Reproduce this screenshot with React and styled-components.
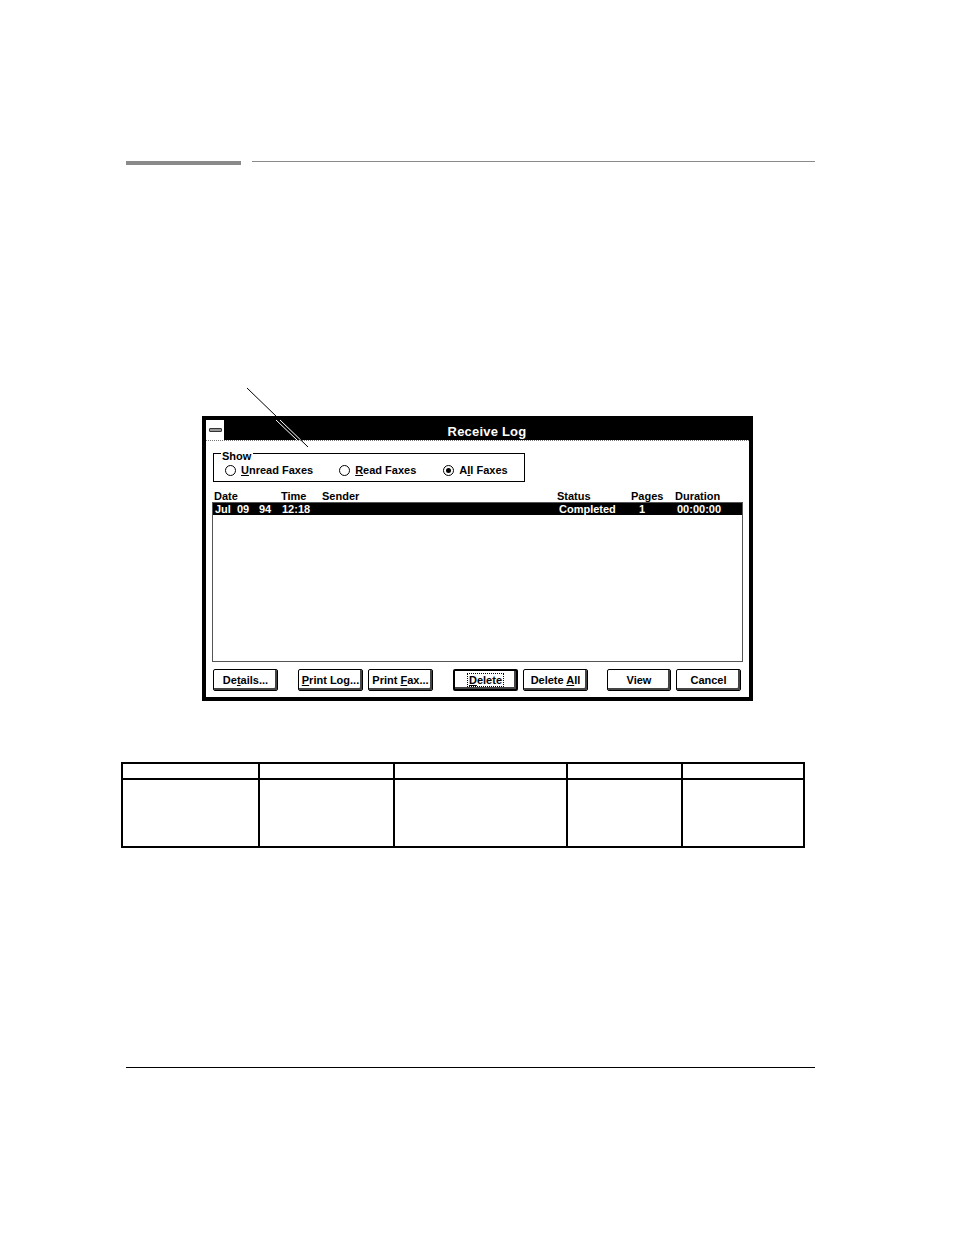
import React from 'react'
import styled, { createGlobalStyle } from 'styled-components'

const GlobalStyle = createGlobalStyle`
    html, body {
        margin: 0;
        padding: 0;
        background: #fff;
    }
    body {
        font-family: "Liberation Sans", Arial, sans-serif;
        color: #000;
    }
`

// column grid shared by the header line and the list rows
const COLUMNS = '67px 41px 235px 74px 44px 1fr'

const Page = styled.div`
    position: relative;
    width: 954px;
    min-height: 1235px;
    padding-top: 161px;
    box-sizing: border-box;
    overflow: hidden;
`

const TopRule = styled.div`
    display: flex;
    align-items: flex-start;
    padding: 0 139px 0 126px;
`

const ThickBar = styled.div`
    width: 115px;
    height: 4px;
    background: #8a8a8a;
`

const ThinLine = styled.div`
    flex: 1;
    height: 1px;
    margin-left: 11px;
    background: #8a8a8a;
`

const Window = styled.div`
    margin: 251px 0 0 202px;
    width: 551px;
    height: 285px;
    box-sizing: border-box;
    border: 4px solid #000;
    display: flex;
    flex-direction: column;
    background: #fff;
`

const TitleBar = styled.div`
    display: flex;
    height: 20px;
    border-bottom: 1px dotted #777;
`

const SysBox = styled.div`
    width: 18px;
    border-right: 1px solid #000;
    display: flex;
    align-items: center;
    justify-content: center;
    background: #fff;
`

const SysDash = styled.div`
    width: 11px;
    height: 2px;
    background: #999;
    border: 1px solid #333;
    border-radius: 1px;
`

const Title = styled.div`
    flex: 1;
    background: #000;
    color: #fff;
    font-size: 13px;
    font-weight: bold;
    line-height: 20px;
    padding-top: 2px;
    box-sizing: border-box;
    text-align: center;
    letter-spacing: 0.2px;
`

const Client = styled.div`
    flex: 1;
    display: flex;
    flex-direction: column;
    padding: 12px 0 0 7px;
    font-size: 11px;
    font-weight: bold;
`

const GroupBox = styled.div`
    position: relative;
    width: 312px;
    height: 29px;
    box-sizing: border-box;
    border: 1px solid #000;
    display: flex;
    align-items: flex-end;
    padding: 0 0 5px 11px;
`

const GroupLabel = styled.span`
    position: absolute;
    top: -4px;
    left: 7px;
    padding: 0 2px 0 1px;
    background: #fff;
    line-height: 12px;
`

const Radio = styled.label`
    display: flex;
    align-items: center;
    gap: 5px;
    margin-right: ${props => props.gap}px;
    line-height: 12px;
`

const Circle = styled.span`
    width: 11px;
    height: 11px;
    box-sizing: border-box;
    border: 1px solid #000;
    border-radius: 50%;
    display: flex;
    align-items: center;
    justify-content: center;

    &::after {
        content: '';
        width: 5px;
        height: 5px;
        border-radius: 50%;
        background: ${props => (props.checked ? '#000' : 'transparent')};
    }
`

const ColHeads = styled.div`
    display: grid;
    grid-template-columns: ${COLUMNS};
    height: 21px;
    align-items: end;
    padding-left: 1px;
    line-height: 13px;
    margin-bottom: -1px;
`

const ListBox = styled.div`
    margin-left: -1px;
    width: 531px;
    height: 160px;
    box-sizing: border-box;
    border: 1px solid #555;
`

const Row = styled.div`
    display: grid;
    grid-template-columns: ${COLUMNS};
    height: 12px;
    line-height: 12px;
    background: ${props => (props.selected ? '#000' : 'transparent')};
    color: ${props => (props.selected ? '#fff' : '#000')};
    padding-left: 1px;
`

const Cell = styled.span`
    display: flex;
    padding-left: ${props => props.indent || 0}px;
    white-space: pre;
`

const DatePart = styled.span`
    width: 22px;
`

const ButtonRow = styled.div`
    display: flex;
    margin-top: 7px;
`

const Button = styled.div`
    width: ${props => props.w || 65}px;
    height: 22px;
    margin-left: ${props => props.gap || 0}px;
    box-sizing: border-box;
    border: ${props => (props.isDefault ? 2 : 1)}px solid #000;
    border-radius: 2px;
    background: #fff;
    box-shadow: inset -2px -2px 0 #444, inset 1px 1px 0 #fff;
    display: flex;
    align-items: center;
    justify-content: center;
    padding-bottom: 1px;
    line-height: 12px;
    white-space: pre;
`

const Focus = styled.span`
    outline: 1px dotted #000;
    outline-offset: 0;
    padding: 0 1px;
`

const Key = styled.span`
    text-decoration: underline;
`

const Grid = styled.table`
    margin: 61px 0 0 121px;
    width: 682px;
    border-collapse: collapse;
    table-layout: fixed;

    td {
        border: 2px solid #000;
        padding: 0;
    }
`

const HeadCell = styled.td`
    height: 14px;
`

const BodyCell = styled.td`
    height: 66px;
`

const BottomRule = styled.div`
    margin: 219px 0 0 126px;
    width: 689px;
    height: 1px;
    background: #000;
`

const Callout = styled.svg`
    position: absolute;
    left: 0;
    top: 0;
    pointer-events: none;
`

const cols = [137, 135, 173, 115, 122]

const App = () => {
    return (
        <Page>
            <GlobalStyle />
            <TopRule>
                <ThickBar />
                <ThinLine />
            </TopRule>

            <Window>
                <TitleBar>
                    <SysBox>
                        <SysDash />
                    </SysBox>
                    <Title>Receive Log</Title>
                </TitleBar>
                <Client>
                    <GroupBox>
                        <GroupLabel>Show</GroupLabel>
                        <Radio gap={26}>
                            <Circle />
                            <span><Key>U</Key>nread Faxes</span>
                        </Radio>
                        <Radio gap={27}>
                            <Circle />
                            <span><Key>R</Key>ead Faxes</span>
                        </Radio>
                        <Radio>
                            <Circle checked />
                            <span>A<Key>l</Key>l Faxes</span>
                        </Radio>
                    </GroupBox>

                    <ColHeads>
                        <Cell>Date</Cell>
                        <Cell>Time</Cell>
                        <Cell>Sender</Cell>
                        <Cell>Status</Cell>
                        <Cell>Pages</Cell>
                        <Cell>Duration</Cell>
                    </ColHeads>
                    <ListBox>
                        <Row selected>
                            <Cell indent={1}>
                                <DatePart>Jul</DatePart>
                                <DatePart>09</DatePart>
                                <DatePart>94</DatePart>
                            </Cell>
                            <Cell indent={1}>12:18</Cell>
                            <Cell />
                            <Cell indent={2}>Completed</Cell>
                            <Cell indent={8}>1</Cell>
                            <Cell indent={2}>00:00:00</Cell>
                        </Row>
                    </ListBox>

                    <ButtonRow>
                        <Button><span>De<Key>t</Key>ails...</span></Button>
                        <Button gap={20}><span><Key>P</Key>rint Log...</span></Button>
                        <Button gap={5}><span>Print <Key>F</Key>ax...</span></Button>
                        <Button gap={20} isDefault>
                            <Focus><Key>D</Key>elete</Focus>
                        </Button>
                        <Button gap={5}><span>Delete <Key>A</Key>ll</span></Button>
                        <Button gap={19} w={64}>View</Button>
                        <Button gap={5}>Cancel</Button>
                    </ButtonRow>
                </Client>
            </Window>

            <Grid>
                <colgroup>
                    {cols.map((w, i) => <col key={i} style={{ width: w }} />)}
                </colgroup>
                <tbody>
                    <tr>
                        {cols.map((w, i) => <HeadCell key={i} />)}
                    </tr>
                    <tr>
                        {cols.map((w, i) => <BodyCell key={i} />)}
                    </tr>
                </tbody>
            </Grid>

            <BottomRule />

            <Callout width="954" height="1235" viewBox="0 0 954 1235">
                <line x1="247" y1="388" x2="308" y2="447" stroke="#000" strokeWidth="1" />
                <line x1="280" y1="420" x2="300.7" y2="440" stroke="#fff" strokeWidth="1" />
                <line x1="276" y1="420" x2="297" y2="440" stroke="#fff" strokeWidth="1" />
            </Callout>
        </Page>
    )
}

export default App
